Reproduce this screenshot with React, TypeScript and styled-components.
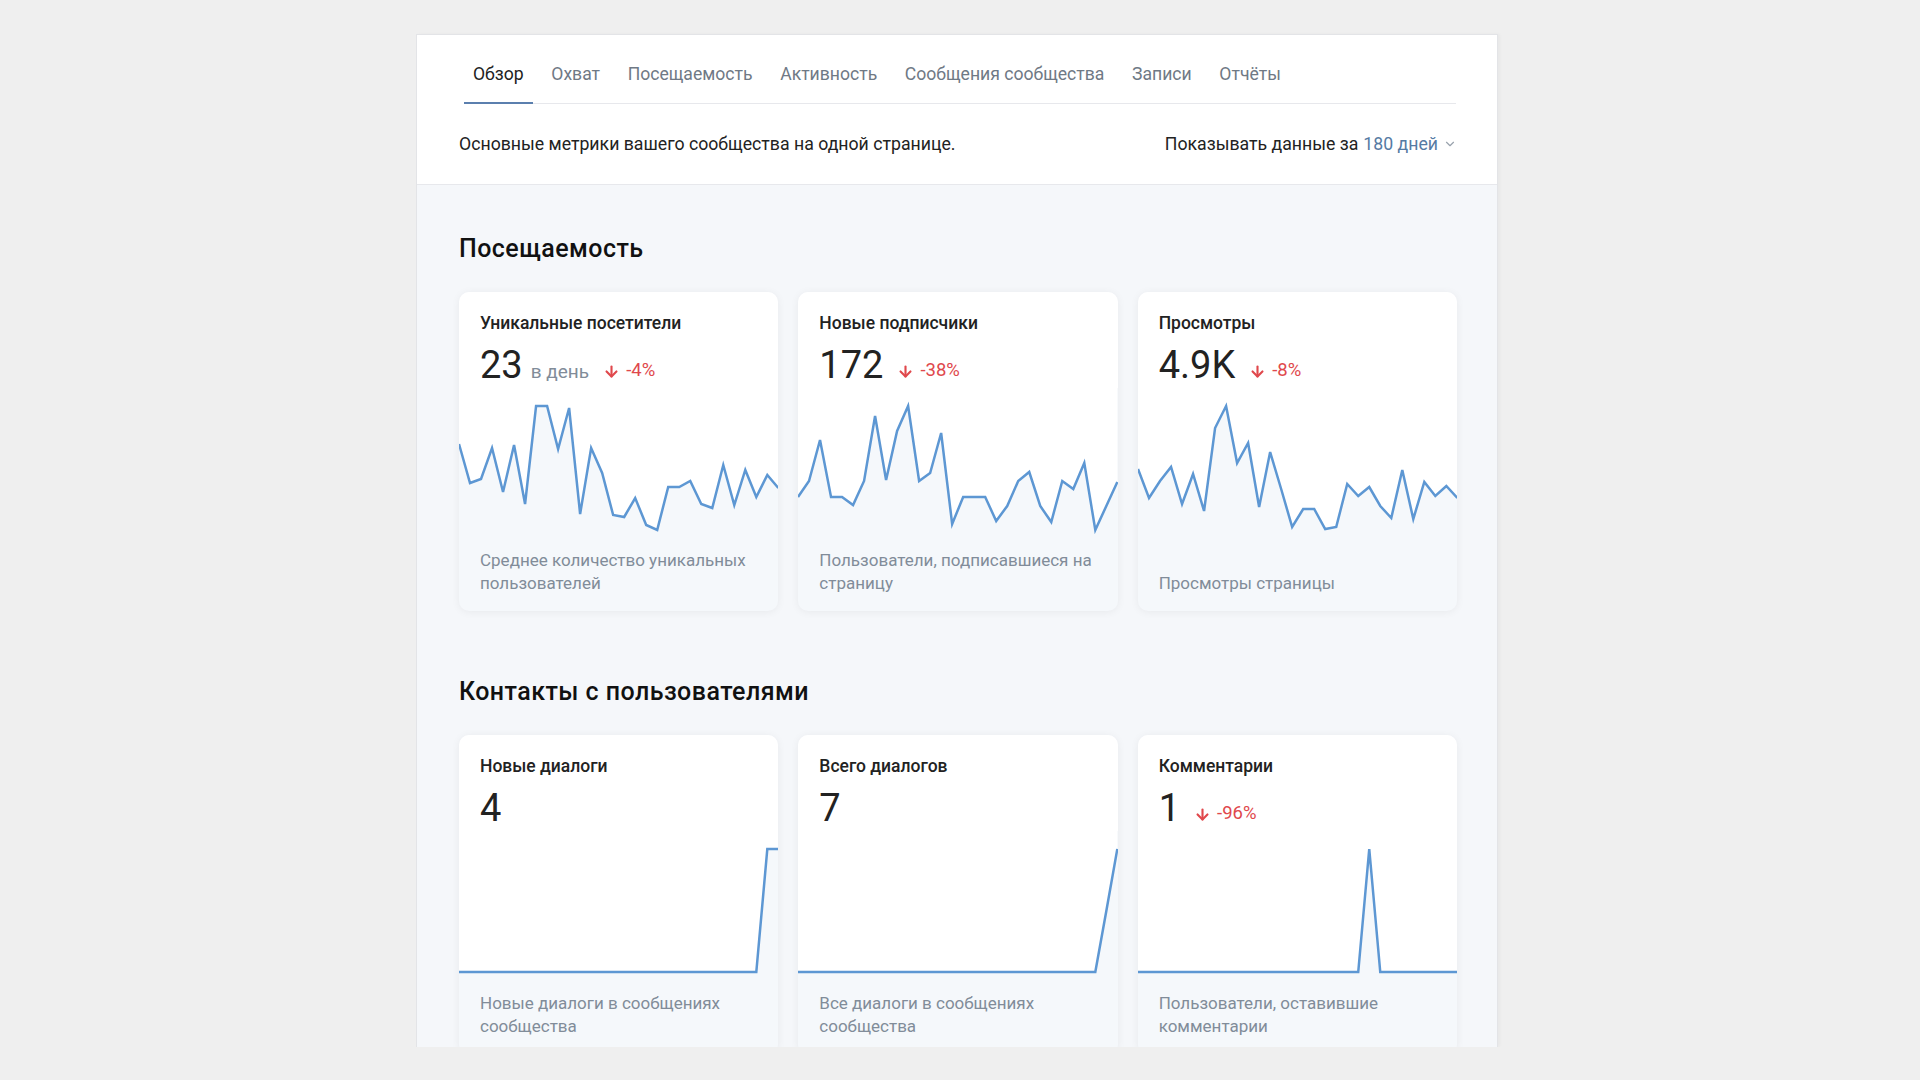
import React from 'react';
import styled, { createGlobalStyle } from 'styled-components';
import { ArrowDown, ChevronDown } from 'lucide-react';

const GlobalStyle = createGlobalStyle`
  body {
    margin: 0;
    background: #efefef;
    font-family: Roboto, "Noto Sans", Arial, sans-serif;
    color: #222;
  }
`;

const Panel = styled.div`
  box-sizing: border-box;
  width: 1082px;
  height: 1013px;
  margin: 34px 0 0 416px;
  border: 1px solid #e3e4e7;
  border-bottom: none;
  background: #f5f7fa;
  box-shadow: 2px 0 3px rgba(0, 0, 0, 0.03);
  overflow: hidden;
`;

const Header = styled.div`
  background: #fff;
  border-bottom: 1px solid #e7e8ec;
  padding: 0 40px 0 42px;
`;

const Tabs = styled.nav`
  display: flex;
  margin: 0 1px 0 5px;
  border-bottom: 1px solid #e7e8ec;
`;

const Tab = styled.div<{ $active?: boolean }>`
  padding: 29px 9px 18px;
  margin-right: 9.6px;
  margin-bottom: -1px;
  font-size: 17.6px;
  line-height: 20px;
  color: ${(p) => (p.$active ? '#222' : '#6f7985')};
  border-bottom: 2px solid ${(p) => (p.$active ? '#5b7fae' : 'transparent')};
  cursor: pointer;
`;

const InfoRow = styled.div`
  display: flex;
  align-items: center;
  justify-content: space-between;
  height: 80px;
  font-size: 17.7px;
`;

const PeriodPicker = styled.div`
  display: flex;
  align-items: center;
  gap: 5px;

  span {
    color: #557aa3;
  }
`;

const Body = styled.div`
  padding: 50px 40px 0 42px;
`;

const SectionTitle = styled.h2`
  margin: 0 0 29px;
  font-size: 25px;
  line-height: 28px;
  font-weight: 500;
  letter-spacing: 0.45px;
  color: #111;
`;

const CardGrid = styled.div`
  display: grid;
  grid-template-columns: repeat(3, 1fr);
  gap: 20px;
  margin-bottom: 67px;
`;

const Card = styled.div`
  display: flex;
  flex-direction: column;
  height: 319px;
  background: #f5f8fb;
  border-radius: 10px;
  box-shadow: 0 1px 8px rgba(0, 0, 0, 0.06);
  overflow: hidden;
`;

const CardHead = styled.div`
  box-sizing: border-box;
  height: 96px;
  padding: 21px 21px 0;
  background: #fff;
`;

const CardTitle = styled.div`
  font-size: 17.5px;
  line-height: 20px;
  font-weight: 500;
  color: #222;
`;

const ValueRow = styled.div`
  display: flex;
  align-items: baseline;
  margin-top: 12px;
  height: 40px;
`;

const Value = styled.div`
  font-size: 38px;
  line-height: 40px;
  color: #222;
`;

const Unit = styled.span`
  margin-left: 8px;
  font-size: 19px;
  color: #818c99;
`;

const Delta = styled.span`
  display: inline-flex;
  align-items: center;
  gap: 6px;
  margin-left: 14px;
  font-size: 18.5px;
  color: #e0484c;

  svg {
    align-self: center;
    transform: translateY(2px);
  }
`;

const ChartSvg = styled.svg`
  display: block;
  width: 100%;
  height: 160px;
  flex: none;
`;

const CardFooter = styled.div`
  flex: 1;
  display: flex;
  align-items: flex-end;
  padding: 0 21px 16px;
  font-size: 17px;
  line-height: 23px;
  color: #818c99;
`;

// y values are in card pixels (top of card = 0)
const W = 319;
const TOP = 96;
const H = 160;

const Chart = ({ series }: { series: number[] }) => {
  const step = W / (series.length - 1);
  const pts = series.map((y, i) => `${(i * step).toFixed(1)},${y}`);
  const line = 'M' + pts.join(' L');
  const mask = `M0,${TOP} L${pts.join(' L')} L${W},${TOP} Z`;
  return (
    <ChartSvg viewBox={`0 ${TOP} ${W} ${H}`} preserveAspectRatio="none">
      <path d={mask} fill="#fff" />
      <path d={line} fill="none" stroke="#5d97d3" strokeWidth={2.5} strokeLinejoin="miter" />
    </ChartSvg>
  );
};

type Metric = {
  title: string;
  value: string;
  unit?: string;
  delta?: string;
  series: number[];
  note: string;
};

const flat = (peaks: Record<number, number>) =>
  Array.from({ length: 30 }, (_, i) => (i in peaks ? peaks[i] : 237));

const traffic: Metric[] = [
  {
    title: 'Уникальные посетители',
    value: '23',
    unit: 'в день',
    delta: '-4%',
    series: [152, 191, 187, 156, 200, 153, 212, 114, 114, 157, 116, 222, 156, 181, 223, 225, 206, 233, 238, 195, 195, 189, 212, 216, 173, 213, 178, 205, 183, 196],
    note: 'Среднее количество уникальных пользователей',
  },
  {
    title: 'Новые подписчики',
    value: '172',
    delta: '-38%',
    series: [205, 189, 148, 205, 205, 213, 189, 124, 188, 139, 114, 189, 181, 141, 232, 205, 205, 205, 229, 214, 189, 180, 214, 230, 189, 197, 171, 238, 214, 190],
    note: 'Пользователи, подписавшиеся на страницу',
  },
  {
    title: 'Просмотры',
    value: '4.9K',
    delta: '-8%',
    series: [177, 206, 189, 175, 212, 182, 219, 136, 114, 171, 151, 215, 160, 197, 235, 217, 217, 237, 235, 192, 204, 195, 214, 226, 178, 227, 190, 204, 194, 206],
    note: 'Просмотры страницы',
  },
];

const contacts: Metric[] = [
  {
    title: 'Новые диалоги',
    value: '4',
    series: flat({ 28: 114, 29: 114 }),
    note: 'Новые диалоги в сообщениях сообщества',
  },
  {
    title: 'Всего диалогов',
    value: '7',
    series: flat({ 28: 176, 29: 114 }),
    note: 'Все диалоги в сообщениях сообщества',
  },
  {
    title: 'Комментарии',
    value: '1',
    delta: '-96%',
    series: flat({ 21: 114 }),
    note: 'Пользователи, оставившие комментарии',
  },
];

const MetricCard = ({ m }: { m: Metric }) => (
  <Card>
    <CardHead>
      <CardTitle>{m.title}</CardTitle>
      <ValueRow>
        <Value>{m.value}</Value>
        {m.unit && <Unit>{m.unit}</Unit>}
        {m.delta && (
          <Delta>
            <ArrowDown size={17} strokeWidth={3} />
            {m.delta}
          </Delta>
        )}
      </ValueRow>
    </CardHead>
    <Chart series={m.series} />
    <CardFooter>{m.note}</CardFooter>
  </Card>
);

const tabs = ['Обзор', 'Охват', 'Посещаемость', 'Активность', 'Сообщения сообщества', 'Записи', 'Отчёты'];

const App = () => (
  <>
    <GlobalStyle />
    <Panel>
      <Header>
        <Tabs>
          {tabs.map((t, i) => (
            <Tab key={t} $active={i === 0}>
              {t}
            </Tab>
          ))}
        </Tabs>
        <InfoRow>
          <div>Основные метрики вашего сообщества на одной странице.</div>
          <PeriodPicker>
            Показывать данные за <span>180 дней</span>
            <ChevronDown size={14} color="#99a2ad" />
          </PeriodPicker>
        </InfoRow>
      </Header>
      <Body>
        <SectionTitle>Посещаемость</SectionTitle>
        <CardGrid>
          {traffic.map((m) => (
            <MetricCard key={m.title} m={m} />
          ))}
        </CardGrid>
        <SectionTitle>Контакты с пользователями</SectionTitle>
        <CardGrid>
          {contacts.map((m) => (
            <MetricCard key={m.title} m={m} />
          ))}
        </CardGrid>
      </Body>
    </Panel>
  </>
);

export default App;
